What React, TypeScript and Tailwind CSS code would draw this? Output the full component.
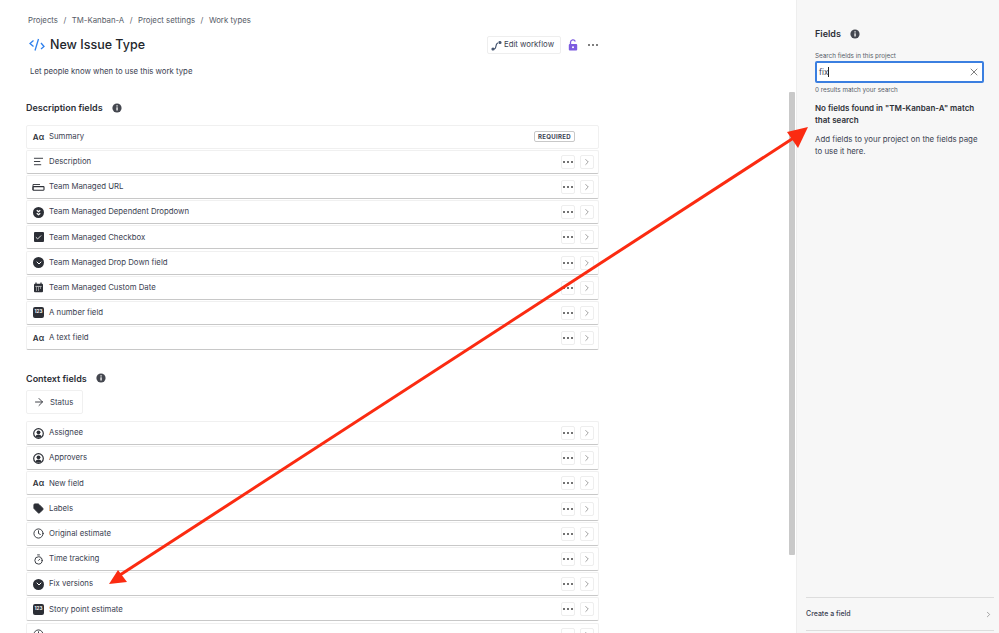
import { ReactNode } from "react";
import { ChevronRight, X, ArrowRight, Clock, Timer, Tag, ChevronDown, Check, AlignLeft } from "lucide-react";

function Badge({ children, className }: { children: ReactNode; className?: string }) {
  return <span className={"flex items-center justify-center bg-[#2c2f36] text-white " + className}>{children}</span>;
}

function InfoDot() {
  return (
    <svg width="10" height="10" viewBox="0 0 10 10">
      <circle cx="5" cy="5" r="4.6" fill="#44474f" />
      <rect x="4.4" y="4.3" width="1.3" height="3.2" fill="#fff" />
      <rect x="4.4" y="2.3" width="1.3" height="1.2" fill="#fff" />
    </svg>
  );
}

function Dots({ color }: { color: string }) {
  return (
    <span className="flex items-center gap-[2px]">
      <i className="h-[2px] w-[2px] rounded-full" style={{ backgroundColor: color }} />
      <i className="h-[2px] w-[2px] rounded-full" style={{ backgroundColor: color }} />
      <i className="h-[2px] w-[2px] rounded-full" style={{ backgroundColor: color }} />
    </span>
  );
}

const aa = <span className="w-[13px] text-center text-[8px] font-semibold text-[#2c2f36] leading-none">Aα</span>;
const drop = <Badge className="h-[11px] w-[11px] rounded-full"><ChevronDown size={8} strokeWidth={3} /></Badge>;
const num = <Badge className="h-[11px] w-[11px] rounded-[2px] text-[4.6px] font-bold">123</Badge>;
const user = (
  <svg width="11" height="11" viewBox="0 0 11 11">
    <circle cx="5.5" cy="5.5" r="4.8" fill="none" stroke="#2c2f36" strokeWidth="1.2" />
    <circle cx="5.5" cy="4.3" r="1.9" fill="#2c2f36" />
    <path d="M2.4 8.8c.5-1.6 1.7-2.3 3.1-2.3s2.6.7 3.1 2.3c-1.8 1.4-4.4 1.4-6.2 0z" fill="#2c2f36" />
  </svg>
);
const calendar = (
  <svg width="11" height="11" viewBox="0 0 11 11">
    <rect x="1" y="1.8" width="9" height="8.4" rx="1" fill="#2c2f36" />
    <path d="M3 .6v2M8 .6v2" stroke="#2c2f36" strokeWidth="1.2" />
    <path d="M2.4 4.4h6.2" stroke="#fff" strokeWidth=".7" />
    <path d="M3 6h1M5 6h1M7 6h1M3 8h1M5 8h1" stroke="#fff" strokeWidth=".9" />
  </svg>
);

const descriptionFields: { name: string; icon: ReactNode }[] = [
  { name: "Description", icon: <AlignLeft size={11} strokeWidth={2} className="text-[#2c2f36]" /> },
  {
    name: "Team Managed URL",
    icon: (
      <svg width="13" height="8" viewBox="0 0 13 8" fill="none" stroke="#2c2f36">
        <path d="M1 7V1.5h7" strokeWidth=".9" />
        <rect x="1" y="3.6" width="11" height="3.6" rx=".6" strokeWidth="1.1" />
      </svg>
    ),
  },
  {
    name: "Team Managed Dependent Dropdown",
    icon: (
      <Badge className="h-[11px] w-[11px] rounded-full">
        <svg width="7" height="7" viewBox="0 0 8 8" fill="none" stroke="currentColor" strokeWidth="1.4">
          <path d="M2 1.5 4 3.2 6 1.5M2 4.8 4 6.5 6 4.8" />
        </svg>
      </Badge>
    ),
  },
  {
    name: "Team Managed Checkbox",
    icon: <Badge className="h-[10px] w-[10px] rounded-[1px]"><Check size={7} strokeWidth={3} /></Badge>,
  },
  { name: "Team Managed Drop Down field", icon: drop },
  { name: "Team Managed Custom Date", icon: calendar },
  { name: "A number field", icon: num },
  { name: "A text field", icon: aa },
];

const contextFields: { name: string; icon: ReactNode }[] = [
  { name: "Assignee", icon: user },
  { name: "Approvers", icon: user },
  { name: "New field", icon: aa },
  { name: "Labels", icon: <Tag size={11} strokeWidth={2} fill="#2c2f36" className="text-[#2c2f36]" /> },
  { name: "Original estimate", icon: <Clock size={11} strokeWidth={2} className="text-[#2c2f36]" /> },
  { name: "Time tracking", icon: <Timer size={11} strokeWidth={2} className="text-[#2c2f36]" /> },
  { name: "Fix versions", icon: drop },
  { name: "Story point estimate", icon: num },
  { name: "", icon: <Clock size={11} strokeWidth={2} className="text-[#2c2f36]" /> },
];

function FieldRow({ name, icon }: { name: string; icon: ReactNode }) {
  return (
    <div className="flex h-[24px] shrink-0 items-center rounded-[2px] border border-[#f0f0f0] border-b-[#c8c8c8] bg-white pl-[5px] pr-[4px]">
      <span className="flex w-[13px] justify-center">{icon}</span>
      <span className="ml-[4px] text-[7.8px] text-[#3b4252]">{name}</span>
      <div className="ml-auto flex items-center gap-[5px]">
        <span className="flex h-[14px] w-[14px] items-center justify-center rounded-[2px] border border-[#eeeeee]">
          <Dots color="#444444" />
        </span>
        <span className="flex h-[14px] w-[14px] items-center justify-center rounded-[2px] border border-[#eeeeee] text-[#666]">
          <ChevronRight size={10} strokeWidth={1.5} />
        </span>
      </div>
    </div>
  );
}

export default function App() {
  return (
    <div className="relative flex h-[633px] w-[999px] overflow-hidden bg-white font-['Inter',sans-serif] text-[#2c2f36]">
      <main className="relative h-full w-[796px] shrink-0 overflow-hidden pl-[26px]">
        <div className="flex items-center gap-[5.5px] pl-[2px] pt-[15px] text-[7.8px] leading-[10px] text-[#565c68]">
          <span>Projects</span>
          <span>/</span>
          <span>TM-Kanban-A</span>
          <span>/</span>
          <span>Project settings</span>
          <span>/</span>
          <span>Work types</span>
        </div>

        <div className="mt-[9px] flex h-[22px] w-[572px] items-center pl-[3px]">
          <svg width="16" height="14" viewBox="0 0 16 14" fill="none" stroke="#2f80ed" strokeWidth="1.3">
            <path d="M4.5 2.5 1 5.5l3.5 3M9.5 1 6 12.5M12 5l3 3.5L12 11" />
          </svg>
          <h1 className="ml-[5px] text-[12.5px] font-medium text-[#22252b]">New Issue Type</h1>
          <div className="ml-auto flex items-center">
            <span className="flex h-[18px] w-[74px] items-center gap-[2px] rounded-[2px] border border-[#eeeeee] px-[3px] text-[7.8px] text-[#3b4252]">
              <svg width="11" height="11" viewBox="0 0 11 11" fill="none" stroke="#44546f" strokeWidth="1.2">
                <circle cx="2" cy="9" r="1" fill="#44546f" />
                <path d="M3 9c3 0 1-6 4-6" />
                <circle cx="9" cy="2.5" r="1" fill="#44546f" />
              </svg>
              Edit workflow
            </span>
            <svg width="10" height="12" viewBox="0 0 10 12" className="ml-[7px]">
              <path d="M2.5 5V3.2a2.5 2.5 0 0 1 4.8-.8" fill="none" stroke="#7c5be0" strokeWidth="1.3" />
              <rect x=".8" y="5" width="8.4" height="6.6" rx="1" fill="#7c5be0" />
              <circle cx="5" cy="8.3" r="1" fill="#fff" />
            </svg>
            <span className="ml-[10px]">
              <Dots color="#555555" />
            </span>
          </div>
        </div>

        <p className="mt-[9px] pl-[4px] text-[7.8px] leading-[12px] text-[#3b4252]">Let people know when to use this work type</p>

        <div className="mt-[24px] flex h-[14px] items-center gap-[9px]">
          <h2 className="text-[9px] font-semibold text-[#2c2f36]">Description fields</h2>
          <InfoDot />
        </div>

        <div className="mt-[9.6px] flex w-[573px] flex-col gap-[1.2px]">
          <div className="flex h-[24px] items-center rounded-[2px] border border-[#f0f0f0] bg-white pl-[5px] pr-[4px]">
            <span className="flex w-[13px] justify-center">{aa}</span>
            <span className="ml-[4px] text-[7.8px] text-[#3b4252]">Summary</span>
            <span className="ml-auto mr-[19px] rounded-[2px] border border-[#c8c8c8] px-[3px] text-[6.1px] font-bold leading-[9px] tracking-[0.3px] text-[#3b4252]">REQUIRED</span>
          </div>
          {descriptionFields.map((f) => (
            <FieldRow key={f.name} name={f.name} icon={f.icon} />
          ))}
        </div>

        <div className="mt-[21.4px] flex h-[14px] items-center gap-[9px]">
          <h2 className="text-[9px] font-semibold text-[#2c2f36]">Context fields</h2>
          <InfoDot />
        </div>

        <div className="mt-[5px] flex h-[24px] w-[57px] items-center gap-[5px] rounded-[2px] border border-[#f0f0f0] pl-[6px]">
          <ArrowRight size={12} strokeWidth={1.8} className="text-[#2c2f36]" />
          <span className="text-[7.8px] text-[#3b4252]">Status</span>
        </div>

        <div className="mt-[6.6px] flex w-[573px] flex-col gap-[1.2px]">
          {contextFields.map((f, i) => (
            <FieldRow key={i} name={f.name} icon={f.icon} />
          ))}
        </div>

        <div className="absolute right-[1px] top-[92px] h-[463px] w-[6px] rounded-[1px] bg-[#c9c9c9]" />
      </main>

      <aside className="relative flex h-full flex-1 flex-col border-l border-[#eeeeee] bg-[#f7f7f7] pl-[18px] pr-[15px]">
        <div className="mt-[28px] flex h-[12px] items-center gap-[9px]">
          <h2 className="text-[9px] font-semibold text-[#2c2f36]">Fields</h2>
          <InfoDot />
        </div>
        <label className="mt-[11px] text-[6.3px] leading-[10px] text-[#565c68]">Search fields in this project</label>
        <div className="flex h-[22px] items-center justify-between rounded-[2px] border-2 border-[#3b7fe0] bg-white px-[2px]">
          <span className="border-r border-[#222] text-[8px] leading-[10px] text-[#3b4252]">fix</span>
          <X size={12} strokeWidth={1.5} className="text-[#555]" />
        </div>
        <p className="mt-[2px] text-[6.3px] leading-[10px] text-[#565c68]">0 results match your search</p>
        <p className="mt-[8px] text-[8px] font-semibold leading-[11.5px] text-[#2c2f36]">
          No fields found in "TM-Kanban-A" match that search
        </p>
        <p className="mt-[8px] text-[7.85px] leading-[11.5px] text-[#3b4252]">Add fields to your project on the fields page to use it here.</p>
        <div className="mt-auto mb-[2px] -ml-[9px] -mr-[10px] flex h-[34px] items-center justify-between border-y border-[#dddddd] pr-[1px]">
          <span className="text-[7px] font-medium text-[#3b4252]">Create a field</span>
          <ChevronRight size={9} strokeWidth={1.5} className="text-[#666]" />
        </div>
      </aside>

      <svg className="pointer-events-none absolute inset-0" width="999" height="633" viewBox="0 0 999 633">
        <line x1="120" y1="575" x2="795" y2="137" stroke="#fb2b11" strokeWidth="3" />
        <polygon points="808,127 787,132 798,148" fill="#fb2b11" />
        <polygon points="109,584 118,570 127,582" fill="#fb2b11" />
      </svg>
    </div>
  );
}
